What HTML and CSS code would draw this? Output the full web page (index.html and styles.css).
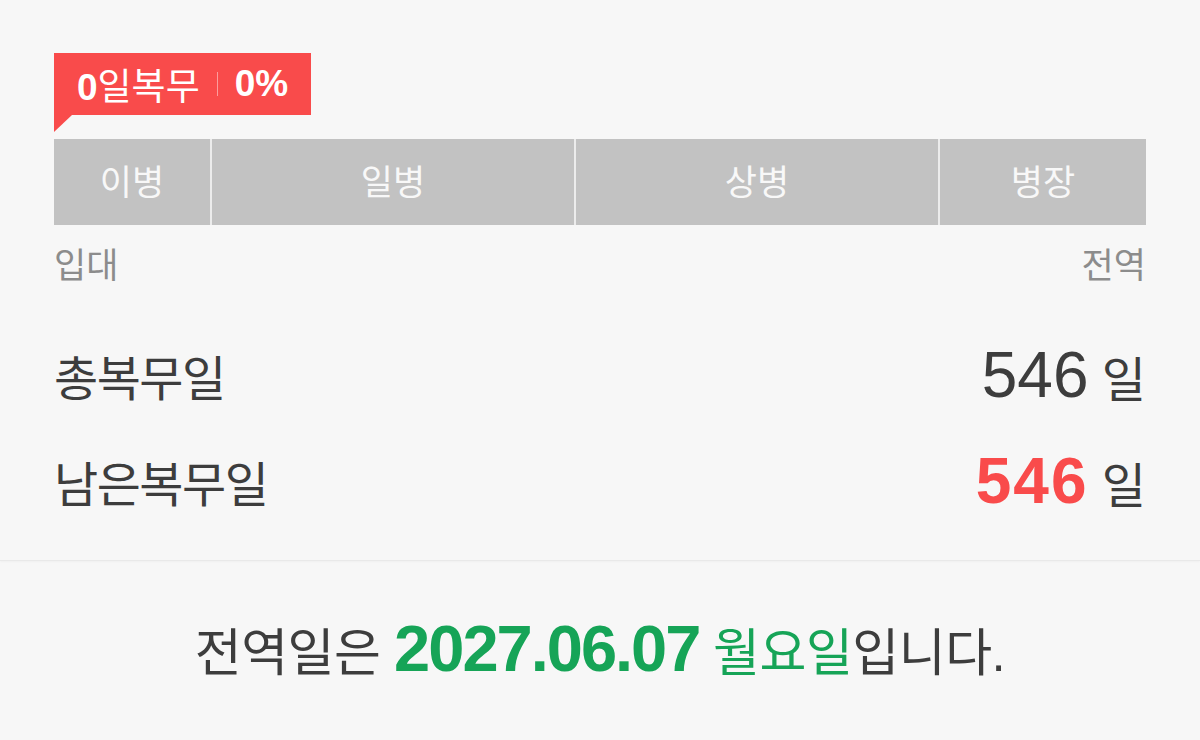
FILE: index.html
```html
<!DOCTYPE html>
<html lang="ko">
<head>
  <meta charset="UTF-8">
  <meta name="viewport" content="width=device-width, initial-scale=1.0">
  <title>전역일 계산기</title>
  <link rel="stylesheet" href="styles.css">
</head>
<body>
  <div class="card">
    <!-- Progress badge -->
    <div class="badge">
      <span><strong>0</strong>일복무</span>
      <span class="badge-sep"></span>
      <strong>0%</strong>
    </div>

    <!-- Rank bar -->
    <div class="rank-bar">
      <div class="rank rank-pvt">이병</div>
      <div class="rank rank-pfc">일병</div>
      <div class="rank rank-cpl">상병</div>
      <div class="rank rank-sgt">병장</div>
    </div>
    <div class="ends">
      <span>입대</span>
      <span>전역</span>
    </div>

    <!-- Day counts -->
    <div class="stat">
      <span class="stat-label">총복무일</span>
      <span class="stat-value"><span class="num">546</span> 일</span>
    </div>
    <div class="stat">
      <span class="stat-label">남은복무일</span>
      <span class="stat-value"><span class="num num-left">546</span> 일</span>
    </div>
  </div>

  <div class="discharge">
    전역일은 <span class="date">2027.06.07</span> <span class="weekday">월요일</span>입니다.
  </div>
</body>
</html>
```

FILE: styles.css
```css
* {
  box-sizing: border-box;
  margin: 0;
  padding: 0;
}

body {
  font-family: "Liberation Sans", "Noto Sans CJK KR", sans-serif;
  background-color: #f7f7f7;
  color: #3d3d3d;
  width: 1200px;
  height: 740px;
  overflow: hidden;
}

.card {
  padding: 53px 54px 0;
  height: 561px;
  border-bottom: 1px solid #e9e9e9;
  box-shadow: 0 1px 2px rgba(0, 0, 0, 0.03);
}

/* Red speech-bubble badge */
.badge {
  position: relative;
  display: inline-flex;
  align-items: center;
  gap: 17px;
  height: 62px;
  padding: 0 23px 0 23px;
  background-color: #f94b4b;
  color: #fff;
  font-size: 37px;
}

.badge strong {
  font-weight: 700;
}

.badge::after {
  content: "";
  position: absolute;
  left: 0;
  top: 62px;
  border-top: 17px solid #f94b4b;
  border-right: 18px solid transparent;
}

.badge-sep {
  width: 1px;
  height: 24px;
  background-color: rgba(255, 255, 255, 0.45);
}

.rank-bar {
  display: flex;
  gap: 2px;
  height: 86px;
  margin-top: 24px;
  background-color: #ececec;
}

.rank {
  display: flex;
  align-items: center;
  justify-content: center;
  padding-bottom: 6px;
  background-color: #c2c2c2;
  color: #f8f8f8;
  font-size: 35px;
}

.rank-pvt { width: 156px; }
.rank-pfc { width: 362px; }
.rank-cpl { width: 362px; }
.rank-sgt { flex: 1; }

.ends {
  display: flex;
  justify-content: space-between;
  margin-top: 12px;
  color: #8c8c8c;
  font-size: 35px;
}

.stat {
  display: flex;
  justify-content: space-between;
  align-items: center;
  height: 106px;
}

.ends + .stat {
  margin-top: 34px;
}

.stat-label {
  font-size: 48px;
  letter-spacing: -1.5px;
  color: #3d3d3d;
}

.stat-value {
  font-size: 48px;
  color: #3d3d3d;
}

.num {
  font-size: 64px;
}

.num-left {
  color: #f94b4b;
  font-weight: 700;
  letter-spacing: 2px;
}

.discharge {
  text-align: center;
  margin-top: 50px;
  font-size: 51px;
  letter-spacing: -0.5px;
  color: #3d3d3d;
}

.date {
  color: #16a457;
  font-weight: 700;
  font-size: 65px;
  letter-spacing: -2px;
}

.weekday {
  color: #16a457;
}
```
